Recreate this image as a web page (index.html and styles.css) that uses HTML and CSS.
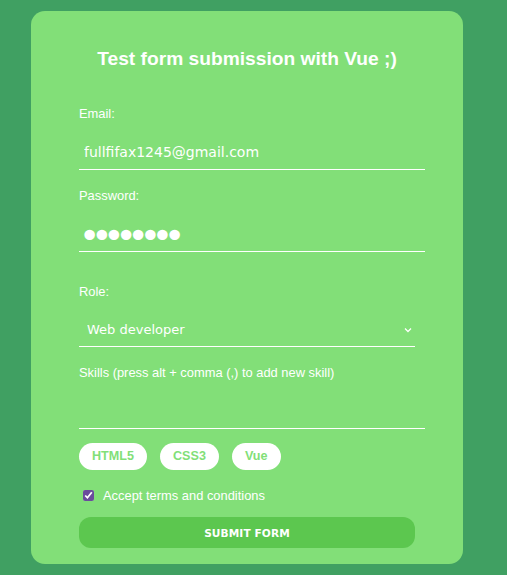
FILE: index.html
```html
<!DOCTYPE html>
<html lang="en">
<head>
<meta charset="utf-8">
<title>Vue form</title>
<link rel="stylesheet" href="styles.css">
</head>
<body>
<div class="page">
  <form class="card">
    <h1 class="title">Test form submission with Vue ;)</h1>

    <label class="label label-email">Email:</label>
    <input class="field" type="email" value="fullfifax1245@gmail.com">

    <label class="label label-password">Password:</label>
    <input class="field password" type="password" value="12345678">

    <label class="label label-role">Role:</label>
    <select class="field select">
      <option>Web developer</option>
      <option>Web designer</option>
    </select>

    <label class="label label-skills">Skills (press alt + comma (,) to add new skill)</label>
    <input class="field skills" type="text">

    <div class="tags">
      <span class="tag">HTML5</span>
      <span class="tag">CSS3</span>
      <span class="tag">Vue</span>
    </div>

    <div class="terms">
      <input class="check" type="checkbox" checked>
      <label class="terms-label">Accept terms and conditions</label>
    </div>

    <div class="submit-row">
      <button class="submit" type="button">SUBMIT FORM</button>
    </div>
  </form>
</div>
</body>
</html>
```

FILE: styles.css
```css
html, body {
  margin: 0;
  padding: 0;
  background: #40a062;
  font-family: "Liberation Sans", Arial, sans-serif;
}

.page {
  padding: 11px 0 0 31px;
}

.card {
  width: 432px;
  box-sizing: border-box;
  background: #82df78;
  border-radius: 14px;
  padding: 36px 48px 16px;
  display: flex;
  flex-direction: column;
  align-items: flex-start;
}

.title {
  align-self: stretch;
  margin: 0;
  text-align: center;
  color: #fff;
  font-size: 19.2px;
  line-height: 23px;
  font-weight: bold;
}

.label {
  display: block;
  color: #fff;
  font-size: 12.9px;
  line-height: 16px;
}

.label-email { margin-top: 36px; }
.label-password { margin-top: 18px; }
.label-role { margin-top: 32px; }
.label-skills { margin-top: 18px; }

.field {
  display: block;
  box-sizing: border-box;
  width: 346px;
  height: 35px;
  margin: 13px 0 0;
  padding: 0 5px;
  background: transparent;
  border: none;
  border-bottom: 1px solid #fff;
  color: #fff;
  font-family: "DejaVu Sans", sans-serif;
  font-size: 14px;
  outline: none;
}

.password {
  font-size: 36px;
  letter-spacing: -9.1px;
  padding: 2px 0 0 0;
}

.select {
  -webkit-appearance: none;
  appearance: none;
  width: 336px;
  font-size: 13px;
  padding: 0 4px 0 8px;
  margin-top: 12px;
  background-image: url("data:image/svg+xml,%3Csvg xmlns='http://www.w3.org/2000/svg' width='8' height='6' viewBox='0 0 8 6'%3E%3Cpath d='M1 1.5 L4 4.5 L7 1.5' fill='none' stroke='%23ffffff' stroke-width='1.3'/%3E%3C/svg%3E");
  background-repeat: no-repeat;
  background-position: 325px 15px;
}

.select option {
  color: #333;
}

.skills {
  margin-top: 13px;
}

.tags {
  display: flex;
  gap: 13px;
  margin-top: 14px;
}

.tag {
  display: block;
  background: #fff;
  color: #82df78;
  font-weight: bold;
  font-size: 12.6px;
  line-height: 15px;
  padding: 6px 13px;
  border-radius: 14px;
}

.terms {
  display: flex;
  align-items: center;
  margin-top: 16px;
  height: 19px;
}

.check {
  margin: 3px 9px 3px 4px;
  width: 11px;
  height: 11px;
  accent-color: #6a4c9c;
}

.terms-label {
  color: #fff;
  font-size: 12.9px;
  line-height: 16px;
}

.submit-row {
  align-self: stretch;
  margin-top: 12px;
}

.submit {
  display: block;
  width: 100%;
  height: 31px;
  border: none;
  border-radius: 12px;
  background: #5cc74f;
  color: #fff;
  font-family: "DejaVu Sans", sans-serif;
  font-weight: bold;
  font-size: 10.6px;
  letter-spacing: 0.1px;
}
```
